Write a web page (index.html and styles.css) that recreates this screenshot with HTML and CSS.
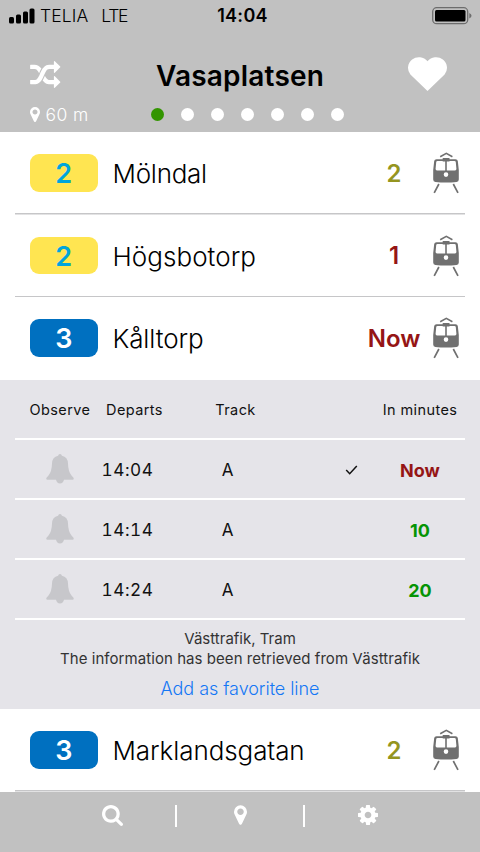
FILE: index.html
```html
<!DOCTYPE html>
<html lang="en">
<head>
<meta charset="utf-8">
<title>Vasaplatsen</title>
<link rel="stylesheet" href="styles.css">
</head>
<body>
<svg class="defs" width="0" height="0" aria-hidden="true">
  <symbol id="tram" viewBox="0 0 28 42">
    <path d="M8.200 4.700 14.300 1.300l6.100 3.400" fill="none" stroke="#707070" stroke-width="1.600"/>
    <path fill="#707070" fill-rule="evenodd" d="M4.500 7.200H10.700V6h6.800v1.200h6Q25.500 7.200 25.800 9L26.800 18v9.500q0 2.200-2.200 2.500Q14 31.200 3.400 30 1.200 29.700 1.200 27.500V18L2.200 9Q2.500 7.200 4.500 7.200zM5.500 9Q4.300 9 4.200 10.200L3.600 16.800Q3.500 18.400 5 18.400H13.200V9.600H10.700V9zM17.500 9v.6H14.800v8.800H23Q24.500 18.400 24.400 16.800L23.800 10.200Q23.700 9 22.500 9zM14 20.300a2.300 2.300 0 1 0 0 4.600 2.300 2.300 0 0 0 0-4.600z"/>
    <path d="M6.900 32 2.200 40.900M21.300 32l4.700 8.900" fill="none" stroke="#707070" stroke-width="1.700"/>
  </symbol>
  <symbol id="bell" viewBox="0 0 28 30">
    <path fill="#c7c7cb" d="M14 0q1.600 0 1.900 1.700Q21.800 3 22 9.500q.2 8 3.500 12l2 2.300q.8 1.500-1 2H18q-.8 3.700-4 3.700t-4-3.700H1.500q-1.800-.5-1-2l2-2.300Q5.800 17.500 6 9.500 6.200 3 12.100 1.700 12.400 0 14 0z"/>
  </symbol>
  <symbol id="pin" viewBox="384 128 1024 1536">
    <path fill="#fff" d="M1152 640q0-106-75-181t-181-75-181 75-75 181 75 181 181 75 181-75 75-181zm256 0q0 109-33 179l-364 774q-16 33-47.500 52t-67.500 19-67.500-19-46.500-52l-365-774q-33-70-33-179 0-212 150-362t362-150 362 150 150 362z"/>
  </symbol>
</svg>
<header class="header">
  <div class="status">
    <div class="carrier">
      <svg width="26" height="16" viewBox="0 0 26 16"><rect x="0" y="9" width="5" height="6.500" rx="1.500"/><rect x="7" y="6.500" width="5" height="9" rx="1.500"/><rect x="14" y="3.500" width="5" height="12" rx="1.500"/><rect x="20.500" y="0.500" width="5" height="15" rx="1.500"/></svg>
      <span class="telia">TELIA</span><span class="lte">LTE</span>
    </div>
    <div class="clock">14:04</div>
    <svg class="battery" width="40" height="18" viewBox="0 0 40 18"><rect x=".7" y=".7" width="35" height="16" rx="4" fill="none" stroke="#6d6d6d" stroke-width="1.300"/><rect x="3" y="3" width="30.500" height="11.500" rx="1.500"/><path d="M37.300 6q2.200 1 2.200 2.800T37.300 11.600z" fill="#6d6d6d"/></svg>
  </div>
  <div class="title-row">
    <svg class="shuffle" viewBox="0 32 1792 1600"><path fill="#fff" d="M666 481q-60 92-137 273-22-45-37-72.500t-40.500-63.500-51-56.500-63-35-81.500-14.500h-224q-14 0-23-9t-9-23v-192q0-14 9-23t23-9h224q250 0 410 225zm1126 799q0 14-9 23l-320 320q-9 9-23 9-13 0-22.500-9.500t-9.500-22.500v-192q-32 0-85 .5t-81 1-73-1-71-5-64-10.500-63-18.500-58-28.500-59-40-55-53.500-56-69.500q59-93 136-273 22 45 37 72.500t40.500 63.500 51 56.500 63 35 81.500 14.500h256v-192q0-14 9-23t23-9q12 0 24 10l319 319q9 9 9 23zm0-896q0 14-9 23l-320 320q-9 9-23 9-13 0-22.500-9.500t-9.500-22.500v-192h-256q-48 0-87 15t-69 45-51 61.500-45 77.500q-32 62-78 171-29 66-49.500 111t-54 105-64 100-74 83-90 68.500-106.500 42-128 16.500h-224q-14 0-23-9t-9-23v-192q0-14 9-23t23-9h224q48 0 87-15t69-45 51-61.500 45-77.500q32-62 78-171 29-66 49.500-111t54-105 64-100 74-83 90-68.500 106.500-42 128-16.500h256v-192q0-14 9-23t23-9q12 0 24 10l319 319q9 9 9 23z"/></svg>
    <h1><span>Vasaplatsen</span></h1>
    <svg class="heart" viewBox="0.700 0.500 37.600 33.500" preserveAspectRatio="none"><path fill="#fff" d="M19.500 4.700A10.500 10.500 0 1 0 3 17.800L19.500 34 36 17.800A10.500 10.500 0 1 0 19.500 4.700z"/></svg>
  </div>
  <div class="sub-row">
    <div class="distance"><svg width="10" height="15"><use href="#pin"/></svg><span>60 m</span></div>
    <div class="dots"><i class="on"></i><i></i><i></i><i></i><i></i><i></i><i></i></div>
  </div>
</header>
<main>
  <section class="line ruled"><b class="badge yellow">2</b><span class="dest d1">Mölndal</span><b class="mins olive">2</b><svg class="tram"><use href="#tram"/></svg></section>
  <section class="line ruled"><b class="badge yellow">2</b><span class="dest d2">Högsbotorp</span><b class="mins red">1</b><svg class="tram"><use href="#tram"/></svg></section>
  <section class="line"><b class="badge blue">3</b><span class="dest d3">Kålltorp</span><b class="mins red">Now</b><svg class="tram"><use href="#tram"/></svg></section>
  <section class="details">
    <div class="dep head"><span class="observe">Observe</span><span class="departs">Departs</span><span class="track">Track</span><span></span><span class="inmin">In minutes</span></div>
    <div class="dep"><svg class="bell"><use href="#bell"/></svg><span class="time">14:04</span><span class="track">A</span><svg class="check" viewBox="0 0 12 10"><path d="m.7 5 3.500 3.700L11.300 1" fill="none" stroke="#111" stroke-width="1.500"/></svg><b class="red">Now</b></div>
    <div class="dep"><svg class="bell"><use href="#bell"/></svg><span class="time">14:14</span><span class="track">A</span><span></span><b class="green">10</b></div>
    <div class="dep"><svg class="bell"><use href="#bell"/></svg><span class="time">14:24</span><span class="track">A</span><span></span><b class="green">20</b></div>
    <p class="info i1">Västtrafik, Tram</p>
    <p class="info i2">The information has been retrieved from Västtrafik</p>
    <a class="fav">Add as favorite line</a>
  </section>
  <section class="line ruled last"><b class="badge blue">3</b><span class="dest d4">Marklandsgatan</span><b class="mins olive">2</b><svg class="tram"><use href="#tram"/></svg></section>
</main>
<footer class="tabs">
  <svg width="21" height="21" viewBox="64 128 1664 1664"><path fill="#fff" d="M1216 832q0-185-131.500-316.500t-316.500-131.500-316.500 131.500-131.500 316.500 131.500 316.500 316.500 131.500 316.500-131.500 131.500-316.500zm512 832q0 52-38 90t-90 38q-54 0-90-38l-343-342q-179 124-399 124-143 0-273.500-55.500t-225-150-150-225-55.500-273.500 55.500-273.500 150-225 225-150 273.500-55.500 273.500 55.500 225 150 150 225 55.500 273.500q0 220-124 399l343 343q37 37 37 90z"/></svg>
  <i></i>
  <svg width="13" height="20"><use href="#pin"/></svg>
  <i></i>
  <svg width="20" height="20" viewBox="128 128 1536 1536"><path fill="#fff" d="M1152 896q0-106-75-181t-181-75-181 75-75 181 75 181 181 75 181-75 75-181zm512-109v222q0 12-8 23t-20 13l-185 28q-19 54-39 91 35 50 107 138 10 12 10 25t-9 23q-27 37-99 108t-94 71q-12 0-26-9l-138-108q-44 23-91 38-16 136-29 186-7 28-36 28h-222q-14 0-24.500-8.500t-11.500-21.500l-28-184q-49-16-90-37l-141 107q-10 9-25 9-14 0-25-11-126-114-165-168-7-10-7-23 0-12 8-23 15-21 51-66.500t54-70.500q-27-50-41-99l-183-27q-13-2-21-12.500t-8-23.500v-222q0-12 8-23t19-13l186-28q14-46 39-92-40-57-107-138-10-12-10-24 0-10 9-23 26-36 98.500-107.500t94.500-71.500q13 0 26 10l138 107q44-23 91-38 16-136 29-186 7-28 36-28h222q14 0 24.500 8.500t11.500 21.500l28 184q49 16 90 37l142-107q9-9 24-9 13 0 25 10 129 119 165 170 7 8 7 22 0 12-8 23-15 21-51 66.500t-54 70.500q26 50 41 98l183 28q13 2 21 12.500t8 23.500z"/></svg>
</footer>
</body>
</html>
```
FILE: styles.css
```css
* { box-sizing: border-box; }
body { margin: 0; width: 480px; height: 852px; overflow: hidden; display: flex; flex-direction: column; background: #fff; color: #000; font-family: Inter, "Liberation Sans", sans-serif; }
svg { display: block; flex: none; }
.defs { position: absolute; }

.header { height: 132px; background: #c1c1c1; flex: none; }
.status { height: 31px; display: grid; grid-template-columns: 1fr 60px 1fr; align-items: center; padding: 0 8px 0 9px; }
.carrier { display: flex; align-items: center; font-size: 17.500px; font-weight: 300; line-height: 20px; }
.telia { margin-left: 5px; letter-spacing: 0.1px; }
.lte { margin-left: 13px; letter-spacing: -1.300px; }
.clock { font-size: 18px; font-weight: 600; text-align: center; white-space: nowrap; letter-spacing: 0.3px; padding-left: 4px; }
.battery { justify-self: end; }
.title-row { height: 70px; display: grid; grid-template-columns: 60px 1fr 60px; align-items: center; padding: 0 30px; }
.shuffle { width: 30.500px; height: 27px; margin-top: 16px; }
h1 { margin: 20px 0 0; font-size: 28px; line-height: 32px; font-weight: 600; text-align: center; letter-spacing: 0.200px; }
.heart { width: 39px; height: 34px; justify-self: end; margin: 16px 3px 0 0; }
.sub-row { height: 26px; display: flex; align-items: center; padding-left: 30px; }
.distance { width: 120px; display: flex; align-items: center; gap: 5.500px; color: #fff; font-size: 17.500px; font-weight: 350; letter-spacing: 0.4px; }
.dots { display: flex; gap: 17px; margin-left: 0.500px; }
.dots i { width: 13px; height: 13px; border-radius: 50%; background: #fff; }
.dots .on { background: #339500; }

.line { height: 82.500px; display: grid; grid-template-columns: 67.500px 1fr 60px 28px; align-items: center; padding: 0 20px 0 30px; }
.ruled { background: linear-gradient(#c6c6c8, #c6c6c8) 15px 100% / 450px 1.500px no-repeat; }
.badge { height: 37.500px; margin-top: -1px; border-radius: 9px; font-size: 27px; line-height: 40px; font-weight: 600; text-align: center; }
.yellow { background: #ffe551; color: #00a5dc; }
.blue { background: #0070c0; color: #fff; }
.dest { padding: 2px 0 0 15px; font-size: 26px; font-weight: 300; line-height: 38px; }
.d1 { letter-spacing: -0.250px; }
.d2 { letter-spacing: 0.050px; }
.d3 { letter-spacing: -0.120px; }
.d4 { letter-spacing: -0.080px; }
.mins { font-size: 24px; font-weight: 600; justify-self: center; margin-right: 16px; }
.tram { width: 28px; height: 42px; }
.olive { color: #95951f; }
.red { color: #951515; }
.green { color: #059405; }

.details { height: 329px; margin-top: 0.5px; background: #e5e4e9; text-align: center; }
.dep { margin: 0 15px; height: 60px; display: grid; grid-template-columns: 90px 90px 66px 114px 90px; align-items: center; border-bottom: 2px solid #fff; font-size: 17px; color: #111; padding-top: 2px; }
.head { font-size: 14.500px; letter-spacing: 0.400px; padding-top: 1px; }
.head .departs { margin-left: -31px; }
.head .track { margin-left: 15px; white-space: nowrap; }
.bell { width: 28px; height: 30px; margin-left: 31px; margin-top: -2px; }
.dep .time { margin: -1px 0 0 -45px; letter-spacing: 0.6px; font-size: 17.200px; font-feature-settings: "tnum"; }
.dep:not(.head) .track { margin-left: -1px; }
.dep b { font-size: 18px; letter-spacing: 0; font-weight: 650; }
.check { width: 13px; height: 10px; margin-left: 84px; }
.info { margin: 0; font-size: 15px; line-height: 20.500px; color: #333; }
.i1 { margin-top: 8.500px; }
.i2 { letter-spacing: 0.060px; }
.fav { display: block; margin-top: 7.500px; font-size: 18px; font-weight: 300; line-height: 24px; color: #1477f5; letter-spacing: -0.050px; }

.tabs { height: 60px; margin-top: auto; flex: none; background: #c1c1c1; display: grid; grid-template-columns: 127px 1px 127px 1px 127px; justify-content: center; justify-items: center; align-items: start; padding-top: 13px; }
.tabs i { width: 2px; height: 22px; background: #fff; }
```
